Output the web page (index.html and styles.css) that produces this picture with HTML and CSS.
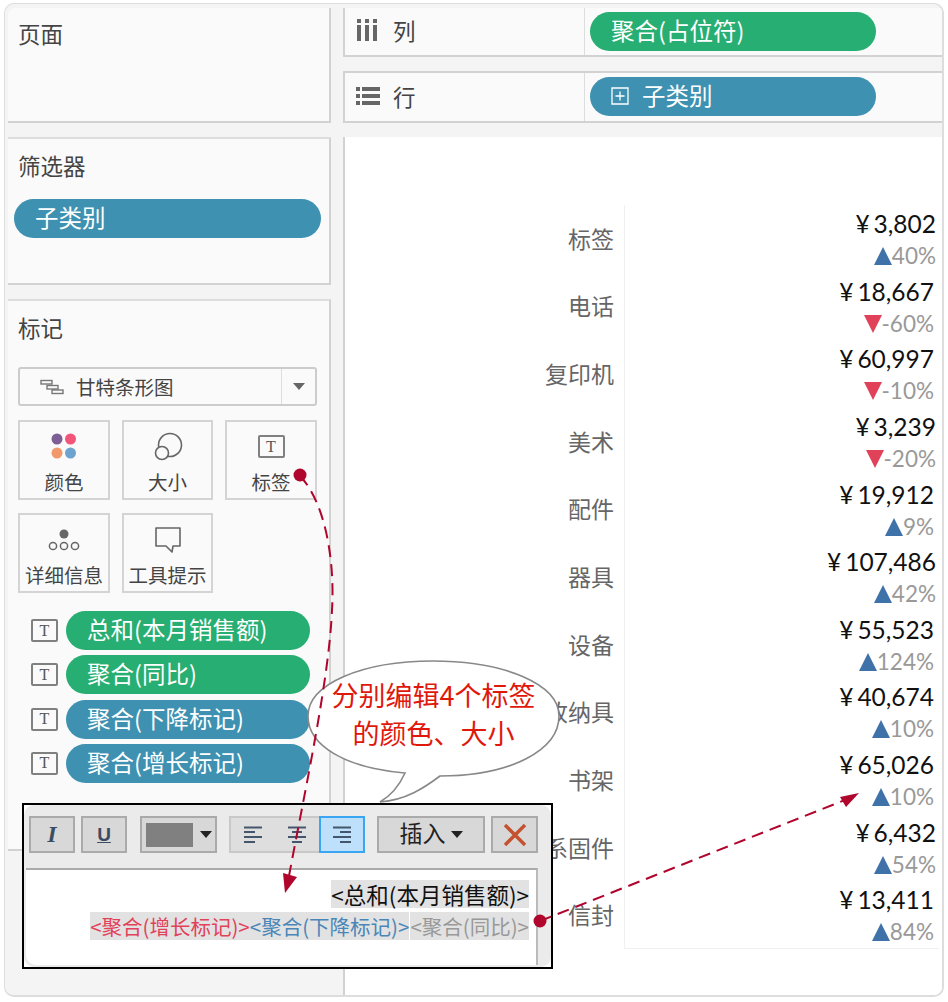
FILE: index.html
```html
<!DOCTYPE html>
<html lang="en">
<head>
    <meta charset="UTF-8">
    <meta name="viewport" content="width=device-width, initial-scale=1.0">
    <title>标签编辑</title>
    <link rel="stylesheet" href="styles.css">
</head>
<body>

    <div class="window">
        <div class="side">
            <div class="card page-card">
                <h3 class="card-title">页面</h3>
            </div>
            <div class="card filter-card">
                <h3 class="card-title">筛选器</h3>
                <div class="pill blue filter-pill">子类别</div>
            </div>
            <div class="card marks-card">
                <h3 class="card-title">标记</h3>
                <div class="mark-select">
                    <svg class="gantt-icon" width="24" height="16" viewBox="0 0 24 16">
                        <rect x="1" y="1.5" width="11" height="3.5" fill="none" stroke="#777" stroke-width="1.4"/>
                        <rect x="7" y="6.5" width="11" height="3.5" fill="none" stroke="#777" stroke-width="1.4"/>
                        <rect x="12" y="11" width="11" height="3.5" fill="none" stroke="#777" stroke-width="1.4"/>
                    </svg>
                    <span class="mark-select-text">甘特条形图</span>
                    <span class="mark-select-arrow"><i class="caret gray"></i></span>
                </div>
                <div class="mark-grid">
                    <div class="mark-btn">
                        <svg width="30" height="30" viewBox="0 0 30 30">
                            <circle cx="8" cy="8" r="5.5" fill="#7d5f96"/>
                            <circle cx="21.5" cy="8" r="5.5" fill="#f2557a"/>
                            <circle cx="8" cy="22" r="5.5" fill="#f2996b"/>
                            <circle cx="21.5" cy="22" r="5.5" fill="#6ea3d0"/>
                        </svg>
                        <span>颜色</span>
                    </div>
                    <div class="mark-btn">
                        <svg width="30" height="30" viewBox="0 0 30 30">
                            <circle cx="17" cy="14" r="11.5" fill="none" stroke="#666" stroke-width="1.6"/>
                            <circle cx="9" cy="22" r="6.5" fill="#fafafa" stroke="#666" stroke-width="1.6"/>
                        </svg>
                        <span>大小</span>
                    </div>
                    <div class="mark-btn">
                        <div class="t-box t-large">T</div>
                        <span>标签</span>
                    </div>
                    <div class="mark-btn">
                        <svg width="32" height="30" viewBox="0 0 32 30">
                            <circle cx="16" cy="10" r="4.5" fill="#666"/>
                            <circle cx="5" cy="22" r="3.6" fill="none" stroke="#666" stroke-width="1.5"/>
                            <circle cx="16" cy="22" r="3.6" fill="none" stroke="#666" stroke-width="1.5"/>
                            <circle cx="27" cy="22" r="3.6" fill="none" stroke="#666" stroke-width="1.5"/>
                        </svg>
                        <span>详细信息</span>
                    </div>
                    <div class="mark-btn">
                        <svg width="30" height="30" viewBox="0 0 30 30">
                            <path d="M3 4h24v18h-7l-1 6-6-6H3z" fill="none" stroke="#666" stroke-width="1.6" stroke-linejoin="round"/>
                        </svg>
                        <span>工具提示</span>
                    </div>
                </div>
                <div class="mark-rows">
                    <div class="mark-row"><div class="t-box">T</div><div class="pill green">总和(本月销售额)</div></div>
                    <div class="mark-row"><div class="t-box">T</div><div class="pill green">聚合(同比)</div></div>
                    <div class="mark-row"><div class="t-box">T</div><div class="pill blue">聚合(下降标记)</div></div>
                    <div class="mark-row"><div class="t-box">T</div><div class="pill blue">聚合(增长标记)</div></div>
                </div>
            </div>
        </div>

        <div class="main">
            <div class="shelf shelf-col">
                <div class="shelf-head">
                    <svg width="22" height="24" viewBox="0 0 22 24">
                        <rect x="1" y="7" width="4" height="16" fill="#666"/>
                        <rect x="9" y="7" width="4" height="16" fill="#666"/>
                        <rect x="17" y="7" width="4" height="16" fill="#666"/>
                        <rect x="1" y="1" width="4" height="4" fill="#666"/>
                        <rect x="9" y="1" width="4" height="4" fill="#666"/>
                        <rect x="17" y="1" width="4" height="4" fill="#666"/>
                    </svg>
                    <span>列</span>
                </div>
                <div class="shelf-body"><div class="pill green shelf-pill">聚合(占位符)</div></div>
            </div>
            <div class="shelf shelf-row">
                <div class="shelf-head">
                    <svg width="24" height="20" viewBox="0 0 24 20">
                        <rect x="0" y="1" width="4" height="4" fill="#666"/>
                        <rect x="6" y="1" width="18" height="4" fill="#666"/>
                        <rect x="0" y="8" width="4" height="4" fill="#666"/>
                        <rect x="6" y="8" width="18" height="4" fill="#666"/>
                        <rect x="0" y="15" width="4" height="4" fill="#666"/>
                        <rect x="6" y="15" width="18" height="4" fill="#666"/>
                    </svg>
                    <span>行</span>
                </div>
                <div class="shelf-body">
                    <div class="pill blue shelf-pill">
                        <svg class="plus-icon" width="18" height="18" viewBox="0 0 18 18">
                            <path d="M1 1h16v16H1zM9 4.5v9M4.5 9h9" fill="none" stroke="#fff" stroke-width="1.3"/>
                        </svg>
                        子类别
                    </div>
                </div>
            </div>

            <div class="view">
                <div class="table">
                    <div class="row">
                        <div class="row-label">标签</div>
                        <div class="row-value near"><div class="amount">¥<b>3,802</b></div><div class="ratio"><i class="tri up"></i>40%</div></div>
                    </div>
                    <div class="row">
                        <div class="row-label">电话</div>
                        <div class="row-value"><div class="amount">¥<b>18,667</b></div><div class="ratio"><i class="tri down"></i>-60%</div></div>
                    </div>
                    <div class="row">
                        <div class="row-label">复印机</div>
                        <div class="row-value"><div class="amount">¥<b>60,997</b></div><div class="ratio"><i class="tri down"></i>-10%</div></div>
                    </div>
                    <div class="row">
                        <div class="row-label">美术</div>
                        <div class="row-value near"><div class="amount">¥<b>3,239</b></div><div class="ratio"><i class="tri down"></i>-20%</div></div>
                    </div>
                    <div class="row">
                        <div class="row-label">配件</div>
                        <div class="row-value"><div class="amount">¥<b>19,912</b></div><div class="ratio"><i class="tri up"></i>9%</div></div>
                    </div>
                    <div class="row">
                        <div class="row-label">器具</div>
                        <div class="row-value near"><div class="amount">¥<b>107,486</b></div><div class="ratio"><i class="tri up"></i>42%</div></div>
                    </div>
                    <div class="row">
                        <div class="row-label">设备</div>
                        <div class="row-value"><div class="amount">¥<b>55,523</b></div><div class="ratio"><i class="tri up"></i>124%</div></div>
                    </div>
                    <div class="row">
                        <div class="row-label">收纳具</div>
                        <div class="row-value"><div class="amount">¥<b>40,674</b></div><div class="ratio"><i class="tri up"></i>10%</div></div>
                    </div>
                    <div class="row">
                        <div class="row-label">书架</div>
                        <div class="row-value"><div class="amount">¥<b>65,026</b></div><div class="ratio"><i class="tri up"></i>10%</div></div>
                    </div>
                    <div class="row">
                        <div class="row-label">系固件</div>
                        <div class="row-value near"><div class="amount">¥<b>6,432</b></div><div class="ratio"><i class="tri up"></i>54%</div></div>
                    </div>
                    <div class="row">
                        <div class="row-label">信封</div>
                        <div class="row-value"><div class="amount">¥<b>13,411</b></div><div class="ratio"><i class="tri up"></i>84%</div></div>
                    </div>
                </div>
            </div>
        </div>
    </div>

    <!-- annotations drawn over the screenshot -->
    <svg class="callout-shape" width="260" height="146" viewBox="0 0 260 146">
        <path d="M99 113 C40 108 2 86 2 56 C2 24 56 1 127 1 C198 1 253 24 253 56 C253 90 205 116 134 116 C118 128 100 140 74 142 C86 135 94 124 99 113 Z" fill="#fff" stroke="#888" stroke-width="1.6"/>
    </svg>
    <div class="callout-text">分别编辑4个标签<br>的颜色、大小</div>

    <div class="editor">
        <div class="toolbar">
            <div class="tool tool-i">I</div>
            <div class="tool tool-u">U</div>
            <div class="tool tool-color"><span class="swatch"></span><i class="caret"></i></div>
            <div class="align-group">
                <div class="align-btn">
                    <svg width="20" height="20" viewBox="0 0 20 20"><path d="M1 2.5h18M1 7h11M1 12h18M1 17h11" stroke="#44566c" stroke-width="1.8"/></svg>
                </div>
                <div class="align-btn">
                    <svg width="20" height="20" viewBox="0 0 20 20"><path d="M1 2.5h18M5 7h10M1 12h18M5 17h10" stroke="#44566c" stroke-width="1.8"/></svg>
                </div>
                <div class="align-btn active">
                    <svg width="20" height="20" viewBox="0 0 20 20"><path d="M1 2.5h18M8 7h11M1 12h18M8 17h11" stroke="#44566c" stroke-width="1.8"/></svg>
                </div>
            </div>
            <div class="tool tool-insert"><span class="insert-text">插入</span><i class="caret"></i></div>
            <div class="tool tool-close">
                <svg width="24" height="24" viewBox="0 0 24 24"><path d="M2 2l20 20M22 2L2 22" stroke="#c4512f" stroke-width="3.4"/></svg>
            </div>
        </div>
        <div class="edit-area">
            <div class="edit-line line-big"><span class="tag tag-black">&lt;总和(本月销售额)&gt;</span></div>
            <div class="edit-line"><span class="tag tag-red">&lt;聚合(增长标记)&gt;</span><span class="tag tag-blue">&lt;聚合(下降标记)&gt;</span><span class="tag tag-gray">&lt;聚合(同比)&gt;</span></div>
        </div>
    </div>

    <svg class="arrows" width="948" height="1002" viewBox="0 0 948 1002">
        <path d="M300 476 C325 502 335 560 332 610 C329 680 305 790 289 876" fill="none" stroke="#b0052c" stroke-width="2" stroke-dasharray="12 7"/>
        <path d="M283 873 L297 877 L285 893 Z" fill="#b0052c"/>
        <circle cx="300" cy="475" r="6.5" fill="#b0052c"/>
        <path d="M540 921 L845 800" fill="none" stroke="#b0052c" stroke-width="2" stroke-dasharray="12 7"/>
        <path d="M840 797 L846 807 L859 793 Z" fill="#b0052c"/>
        <circle cx="540" cy="921" r="6.5" fill="#b0052c"/>
    </svg>

</body>
</html>
```

FILE: styles.css
```css
* {
    box-sizing: border-box;
}
body {
    margin: 0;
    background-color: #fff;
    font-family: "Noto Sans CJK SC", sans-serif;
    color: #444;
}
.window {
    display: flex;
    gap: 12px;
    width: 940px;
    height: 994px;
    margin: 3px 0 0 4px;
    padding: 4px 0 0 3px;
    background-color: #f4f4f4;
    border: 1px solid #ddd;
    border-right-width: 2px;
    border-bottom-width: 2px;
    border-radius: 10px;
    overflow: hidden;
}
.side {
    display: flex;
    flex-direction: column;
    gap: 14px;
    width: 323px;
    flex-shrink: 0;
}
.card {
    background-color: #fafafa;
    border-top: 2px solid #ddd;
    border-right: 2px solid #d2d2d2;
    border-bottom: 2px solid #d2d2d2;
}
.page-card {
    height: 115px;
    border-top: none;
    border-top-left-radius: 8px;
}
.filter-card {
    height: 148px;
}
.marks-card {
    height: 552px;
}
.card-title {
    margin: 0;
    padding: 9px 0 0 10px;
    font-size: 22.5px;
    line-height: 32px;
    font-weight: 400;
}
.filter-card .card-title {
    padding-top: 10px;
}
.marks-card .card-title {
    padding-top: 10px;
}
.pill {
    display: flex;
    align-items: center;
    height: 39px;
    padding-left: 21px;
    padding-bottom: 3px;
    border-radius: 20px;
    color: #fff;
    font-size: 23.5px;
    white-space: nowrap;
}
.green {
    background-color: #27ae72;
}
.blue {
    background-color: #3e91b0;
}
.filter-pill {
    margin: 18px 8px 0 6px;
}

/* marks */
.mark-select {
    display: flex;
    align-items: center;
    height: 39px;
    margin: 24px 12px 0 10px;
    background-color: #fafafa;
    border: 2px solid #ccc;
    border-radius: 3px;
    font-size: 19.5px;
}
.gantt-icon {
    margin-left: 20px;
}
.mark-select-text {
    margin-left: 12px;
}
.mark-select-arrow {
    display: flex;
    align-items: center;
    justify-content: center;
    width: 34px;
    height: 100%;
    margin-left: auto;
    border-left: 1px solid #ddd;
}
.caret {
    display: inline-block;
    width: 0;
    height: 0;
    border-left: 6px solid transparent;
    border-right: 6px solid transparent;
    border-top: 7px solid #222;
}
.caret.gray {
    border-top-color: #666;
}
.mark-grid {
    display: grid;
    grid-template-columns: 92px 91px 92px;
    grid-auto-rows: 80px;
    column-gap: 12px;
    row-gap: 13px;
    margin: 14px 0 0 10px;
}
.mark-btn {
    display: flex;
    flex-direction: column;
    align-items: center;
    padding-top: 9px;
    background-color: #fafafa;
    border: 2px solid #d4d4d4;
    font-size: 19.5px;
    line-height: 28px;
    white-space: nowrap;
}
.mark-btn svg {
    height: 30px;
}
.mark-btn span {
    margin-top: 7px;
}
.t-box {
    display: flex;
    align-items: center;
    justify-content: center;
    width: 27px;
    height: 23px;
    border: 2px solid #808080;
    border-radius: 2px;
    font-family: "Liberation Serif", serif;
    font-size: 16px;
    color: #555;
    flex-shrink: 0;
}
.t-large {
    margin: 4px 0 3px;
}
.mark-rows {
    display: flex;
    flex-direction: column;
    gap: 5.3px;
    margin: 18px 0 0 23px;
}
.mark-row {
    display: flex;
    align-items: center;
    gap: 8px;
}
.mark-row .pill {
    width: 244px;
}

/* shelves */
.main {
    display: flex;
    flex-direction: column;
    flex: 1;
    min-width: 0;
}
.shelf {
    display: flex;
    background-color: #fafafa;
    border-left: 2px solid #d2d2d2;
    border-bottom: 2px solid #d2d2d2;
}
.shelf-col {
    height: 49px;
}
.shelf-row {
    height: 52px;
    margin-top: 14px;
    border-top: 2px solid #d2d2d2;
}
.shelf-head {
    display: flex;
    align-items: center;
    gap: 15px;
    width: 240px;
    padding-left: 11px;
    border-right: 1px solid #ddd;
    font-size: 22.5px;
    flex-shrink: 0;
}
.shelf-body {
    display: flex;
    align-items: center;
    flex: 1;
    padding-left: 5px;
}
.shelf-col .shelf-body {
    align-items: flex-start;
    padding-top: 4px;
}
.shelf-col .shelf-head {
    padding-bottom: 3px;
}
.shelf-row .shelf-head {
    gap: 13px;
    padding-bottom: 2px;
}
.shelf-row .shelf-body {
    padding-bottom: 2px;
}
.shelf-pill {
    width: 286px;
}
.plus-icon {
    margin: 3px 13px 0 0;
}

/* view */
.view {
    flex: 1;
    margin-top: 14px;
    padding-top: 68px;
    background-color: #fff;
    border-left: 2px solid #d2d2d2;
}
.table {
    width: 594px;
}
.row {
    display: flex;
    height: 67.65px;
}
.row-label {
    display: flex;
    align-items: center;
    justify-content: flex-end;
    width: 279px;
    padding: 0 10px 2px 0;
    font-size: 23px;
    color: #666;
}
.row-value {
    flex: 1;
    padding: 3px 5px 0 0;
    text-align: right;
    border-left: 1px solid #f0f0f0;
    font-family: Lato, sans-serif;
}
.row-value.near {
    padding-right: 3px;
}
.row:last-child .row-value {
    border-bottom: 1px solid #f0f0f0;
}
.amount {
    font-size: 24.5px;
    line-height: 32px;
    color: #111;
}
.amount b {
    margin-left: 4px;
    font-weight: 400;
}
.ratio {
    display: flex;
    align-items: center;
    justify-content: flex-end;
    font-size: 22.5px;
    line-height: 32px;
    color: #999;
}
.tri {
    width: 0;
    height: 0;
    border-left: 9px solid transparent;
    border-right: 9px solid transparent;
}
.tri.up {
    border-bottom: 18px solid #3f72a8;
}
.tri.down {
    border-top: 18px solid #e2415a;
}

/* annotations */
.callout-shape {
    position: absolute;
    left: 306px;
    top: 660px;
}
.callout-text {
    position: absolute;
    left: 308px;
    top: 676px;
    width: 251px;
    text-align: center;
    font-size: 27px;
    line-height: 38px;
    color: #e0180c;
}
.arrows {
    position: absolute;
    left: 0;
    top: 0;
    pointer-events: none;
}
.editor {
    position: absolute;
    left: 22px;
    top: 803px;
    width: 531px;
    height: 166px;
    padding: 11px 0 0 5px;
    background-color: #fff;
    border: 2px solid #000;
    overflow: hidden;
}
.editor::before {
    content: "";
    position: absolute;
    inset: 0;
    background-color: #ebebeb;
    border-radius: 10px;
}
.toolbar {
    position: relative;
    display: flex;
    height: 37px;
}
.tool {
    display: flex;
    align-items: center;
    justify-content: center;
    height: 37px;
    margin-right: 6px;
    background-color: #d8d8d8;
    border: 2px solid #aaa;
    font-size: 23px;
    color: #222;
}
.tool-i, .tool-u {
    width: 46px;
    color: #3c4d63;
}
.tool-i {
    font-family: "Liberation Serif", serif;
    font-style: italic;
    font-weight: 700;
    font-size: 24px;
}
.tool-u {
    font-family: "Liberation Sans", sans-serif;
    font-size: 19px;
    font-weight: 700;
    text-decoration: underline;
    margin-right: 13px;
}
.tool-color {
    gap: 7px;
    width: 77px;
    margin-right: 12px;
}
.swatch {
    width: 47px;
    height: 24px;
    background-color: #808080;
}
.align-group {
    display: flex;
    width: 136px;
    height: 37px;
    margin-right: 12px;
    background-color: #dedede;
    border: 2px solid #c8c8c8;
}
.align-btn {
    display: flex;
    align-items: center;
    justify-content: center;
    flex: 1;
}
.align-btn.active {
    flex: none;
    width: 46px;
    height: 37px;
    margin: -2px -2px 0 0;
    background-color: #bfe0fb;
    border: 2px solid #3aa6f2;
}
.tool-insert {
    gap: 5px;
    width: 108px;
}
.insert-text {
    margin-top: -5px;
}
.tool-close {
    width: 47px;
    margin-right: 0;
}
.edit-area {
    position: relative;
    width: 512px;
    height: 97px;
    margin: 15px 0 0 -3px;
    padding: 10px 7px 0 0;
    background-color: #fff;
    border-top: 2px solid #aaa;
    border-right: 2px solid #bbb;
    border-bottom-left-radius: 10px;
}
.edit-line {
    display: flex;
    justify-content: flex-end;
    height: 32px;
    font-size: 20.5px;
    line-height: 28px;
}
.line-big {
    font-size: 22.5px;
}
.tag {
    height: 28px;
    background-color: #e2e2e2;
    white-space: nowrap;
}
.tag-black {
    color: #111;
}
.tag-red {
    color: #e2415a;
}
.tag-blue {
    color: #4a86b8;
}
.tag-gray {
    color: #999;
    margin-left: 1px;
}
```
